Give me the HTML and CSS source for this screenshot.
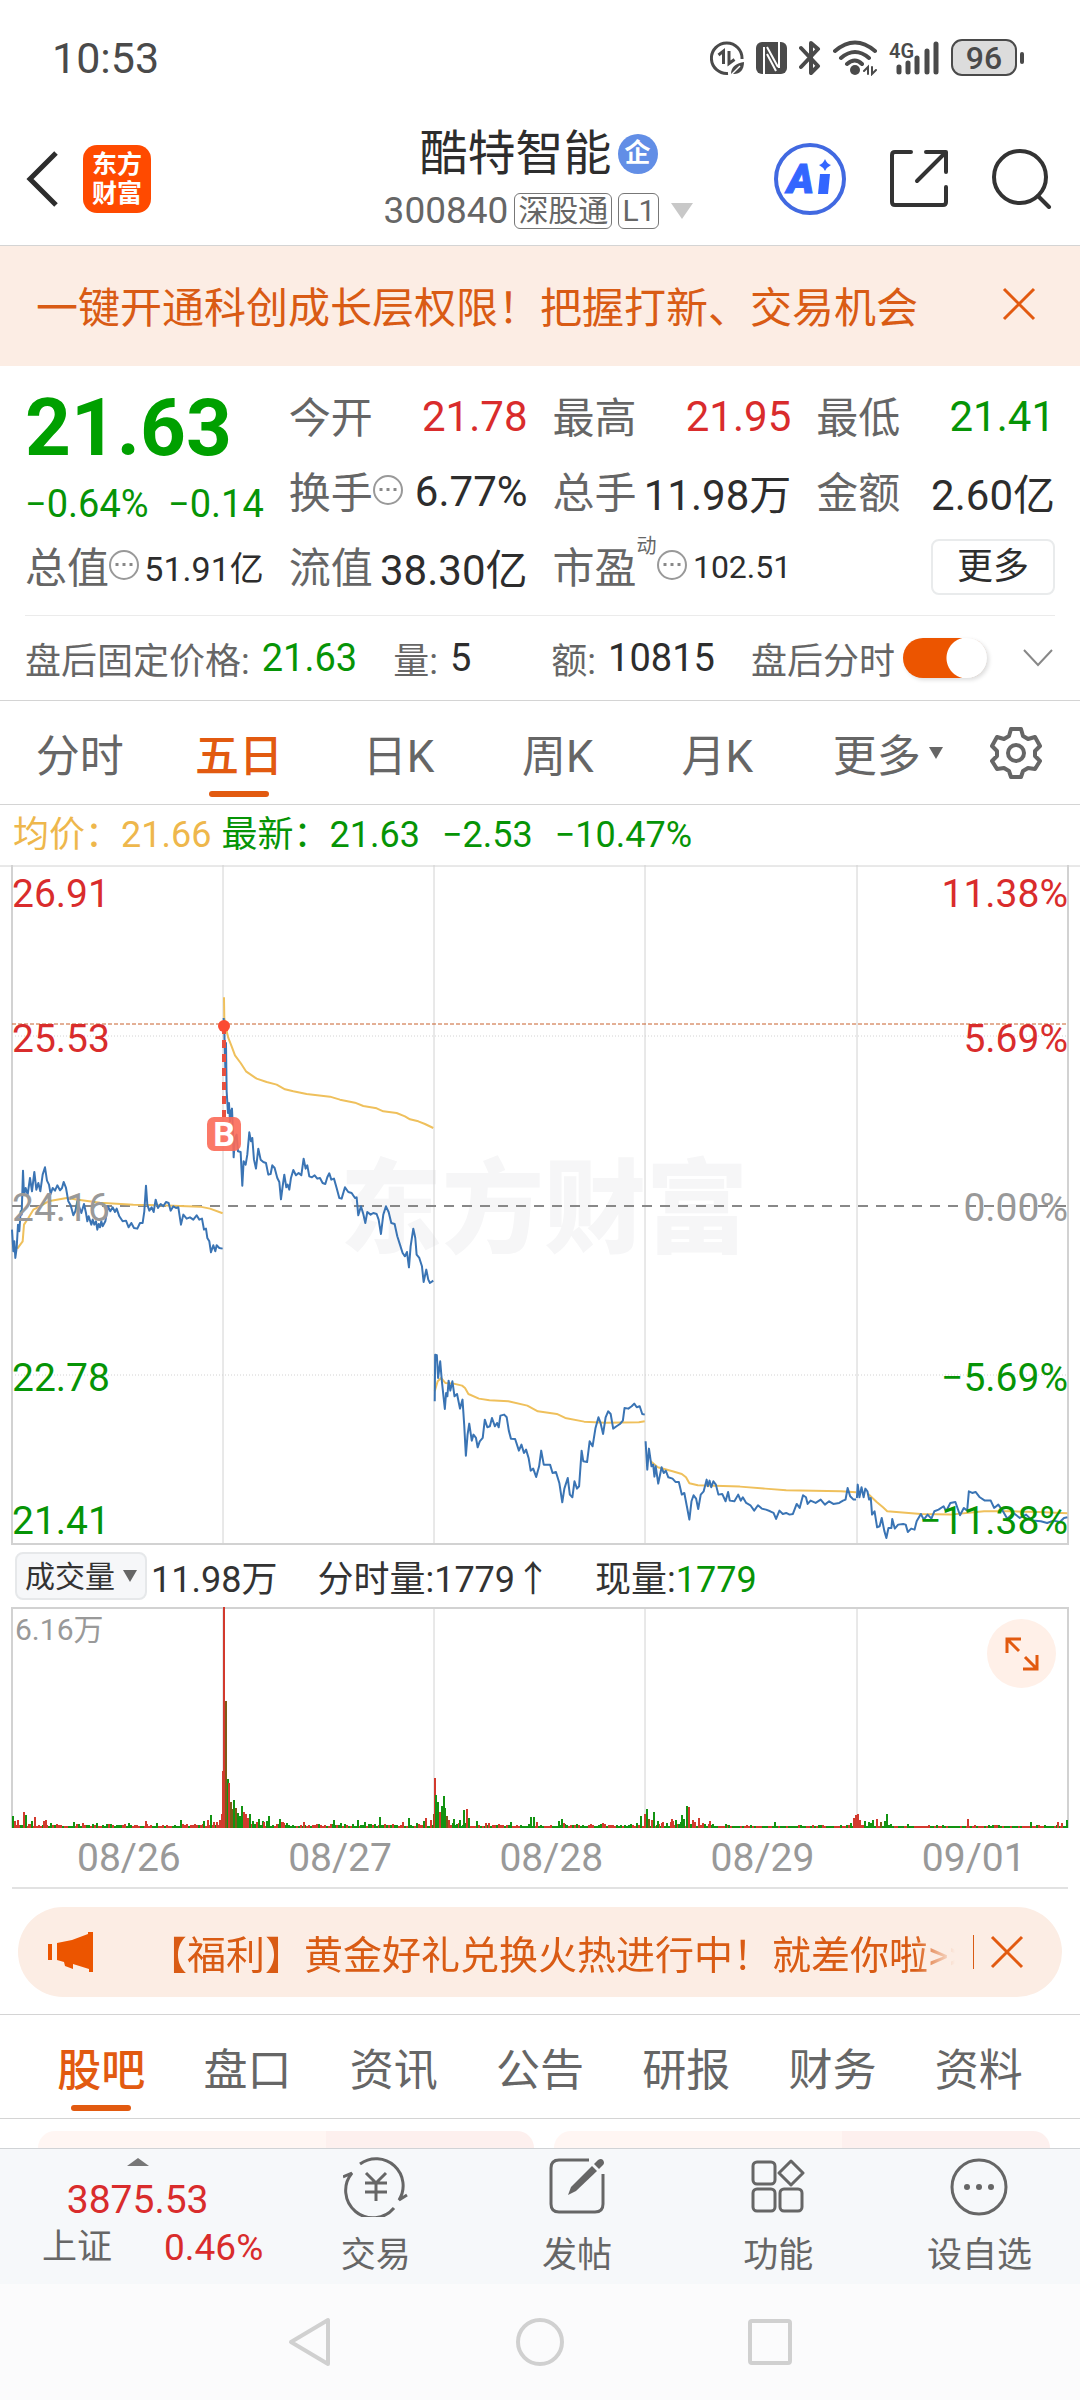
FILE: index.html
```
<!DOCTYPE html>
<html lang="zh-CN">
<head>
  <meta charset="utf-8">
  <meta name="viewport" content="width=device-width, initial-scale=1">
  <title>酷特智能 300840</title>
  <link rel="stylesheet" href="styles.css">
</head>
<body>
<div class="page">
  <div class="status-bar">
    <span class="clock">10:53</span>
    <div class="status-icons">
      <svg width="34" height="36" viewBox="0 0 34 36" fill="none" stroke="#4a4a4a" stroke-width="3">
        <path d="M18 33.5A15.300 15.300 0 1 1 32 19"/>
        <path d="M8.500 15L13.500 11V24M19 11V23.500L24.500 19.500"/>
        <path d="M21 34C21 26 27 23 34 22C34 30 30 34 24 34Z" fill="#4a4a4a" stroke="none"/>
        <path d="M21 35L30 26" stroke="#fff" stroke-width="1.500"/>
      </svg>
      <svg width="31" height="36" viewBox="0 0 31 36">
        <rect y="2" width="31" height="32" rx="6" fill="#4a4a4a"/>
        <path d="M8 34V7M23 2V28M11 14L20 31M11 7L22 27" fill="none" stroke="#fff" stroke-width="2"/>
      </svg>
      <svg width="22" height="36" viewBox="0 0 22 36" fill="none" stroke="#4a4a4a" stroke-width="4" stroke-linejoin="round" stroke-linecap="round">
        <path d="M2 8L19 26L12 33V3L19 9L2 27"/>
      </svg>
      <svg width="44" height="36" viewBox="0 0 44 36" fill="none" stroke="#4a4a4a" stroke-width="4" stroke-linecap="round">
        <path d="M2 11Q22 -6 42 11M8 18Q22 6 36 18M14 24Q22 17 29 24"/>
        <circle cx="22" cy="30" r="5" fill="#4a4a4a" stroke="none"/>
        <path d="M31 31L35 27V34M39 27V34L43 30" stroke-width="2"/>
      </svg>
      <svg width="50" height="36" viewBox="0 0 50 36">
        <text x="0" y="18" font-size="20" font-weight="600" fill="#4a4a4a">4G</text>
        <path d="M10 27V32M19 23V32M28 18V32M38 11V32M47 4V32" fill="none" stroke="#4a4a4a" stroke-width="5" stroke-linecap="round"/>
      </svg>
      <svg width="74" height="38" viewBox="0 0 74 38">
        <rect x="1" y="1" width="64" height="35" rx="10" fill="#dcdcdc" stroke="#4a4a4a" stroke-width="2"/>
        <text x="33" y="30" font-size="32" font-weight="500" text-anchor="middle" fill="#4a4a4a">96</text>
        <rect x="69" y="13" width="4" height="12" rx="2" fill="#4a4a4a"/>
      </svg>
    </div>
  </div>

  <header class="header">
    <div class="header-left">
      <button class="icon-btn" aria-label="返回">
        <svg width="34" height="56" viewBox="0 0 34 56" fill="none" stroke="#2d2d2d" stroke-width="5"><path d="M31 2L5 28L31 54"/></svg>
      </button>
      <div class="logo"><span>东方</span><span>财富</span></div>
    </div>
    <div class="title">
      <h1>酷特智能<span class="badge">企</span></h1>
      <div class="code">
        <span>300840</span><span class="tag">深股通</span><span class="tag">L1</span>
        <svg width="22" height="16" viewBox="0 0 22 16"><path d="M0 0H22L11 16Z" fill="#c8c8c8"/></svg>
      </div>
    </div>
    <div class="header-right">
      <button class="icon-btn" aria-label="AI">
        <svg width="72" height="72" viewBox="0 0 72 72">
          <circle cx="36" cy="36" r="34" fill="none" stroke="#4169e1" stroke-width="4"/>
          <text x="13" y="50" font-size="41" font-weight="900" font-style="italic" fill="#3366ff" stroke="#3366ff" stroke-width="1">A</text>
          <path d="M46 31H56L54 51H44Z" fill="#3366ff"/>
          <path d="M51 16Q53 21 57 22Q53 24 51 28Q49 24 45 22Q49 21 51 16Z" fill="#3366ff"/>
        </svg>
      </button>
      <button class="icon-btn" aria-label="分享">
        <svg width="58" height="58" viewBox="0 0 58 58" fill="none" stroke="#333" stroke-width="4" stroke-linecap="round" stroke-linejoin="round">
          <path d="M21 2H5Q2 2 2 5V52Q2 55 5 55H53Q56 55 56 52V37M36 2H56V22M55 3L27 31"/>
        </svg>
      </button>
      <button class="icon-btn" aria-label="搜索">
        <svg width="60" height="60" viewBox="0 0 60 60" fill="none" stroke="#333" stroke-width="4" stroke-linecap="round">
          <circle cx="28" cy="28" r="26"/><path d="M46 47L57 58"/>
        </svg>
      </button>
    </div>
  </header>

  <div class="notice">
    <a href="#">一键开通科创成长层权限！把握打新、交易机会</a>
    <button class="icon-btn" aria-label="关闭">
      <svg width="34" height="34" viewBox="0 0 34 34" fill="none" stroke="#e25a10" stroke-width="3"><path d="M2 2L32 32M32 2L2 32"/></svg>
    </button>
  </div>

  <section class="quote">
    <div class="price-cell">
      <div class="price">21.63</div>
      <div class="change"><span>−0.64%</span><span>−0.14</span></div>
    </div>
    <div class="cell"><span>今开</span><b class="up">21.78</b></div>
    <div class="cell"><span>最高</span><b class="up">21.95</b></div>
    <div class="cell"><span>最低</span><b class="down">21.41</b></div>
    <div class="cell"><span>换手<i class="dots"></i></span><b>6.77%</b></div>
    <div class="cell"><span>总手</span><b>11.98万</b></div>
    <div class="cell"><span>金额</span><b>2.60亿</b></div>
    <div class="cell"><span>总值<i class="dots"></i></span><b class="small">51.91亿</b></div>
    <div class="cell"><span>流值</span><b>38.30亿</b></div>
    <div class="cell"><span>市盈<sup>动</sup><i class="dots"></i></span><b class="smaller">102.51</b></div>
    <div class="cell end"><button class="more-btn">更多</button></div>
  </section>

  <section class="after-hours">
    <div class="pair"><span>盘后固定价格:</span><b class="down">21.63</b></div>
    <div class="pair volume"><span>量:</span><b>5</b></div>
    <div class="pair"><span>额:</span><b>10815</b></div>
    <label class="pair switch">盘后分时<input type="checkbox" checked></label>
    <button class="icon-btn" aria-label="展开">
      <svg width="30" height="18" viewBox="0 0 30 18" fill="none" stroke="#888" stroke-width="2"><path d="M1 1L15 16L29 1"/></svg>
    </button>
  </section>

  <nav class="period-tabs">
    <button>分时</button>
    <button class="active">五日</button>
    <button>日K</button>
    <button>周K</button>
    <button>月K</button>
    <button>更多<svg class="caret" width="14" height="12" viewBox="0 0 14 12"><path d="M0 0H14L7 12Z" fill="#666"/></svg></button>
    <button class="gear" aria-label="设置">
      <svg width="52" height="52" viewBox="0 0 52 52" fill="none" stroke="#666" stroke-width="4" stroke-linejoin="round">
        <path d="M21 2H31L33 9L38 12L45 10L50 19L45 24V29L50 34L45 42L38 41L33 44L31 50H21L19 44L14 41L7 42L2 34L7 29V24L2 19L7 10L14 12L19 9Z"/>
        <circle cx="26" cy="26" r="8"/>
      </svg>
    </button>
  </nav>

  <div class="latest">
    <span class="avg">均价：21.66</span>
    <span class="now">最新：21.63</span>
    <span class="now">−2.53</span>
    <span class="now">−10.47%</span>
  </div>

  <svg class="chart" viewBox="0 0 1080 680">
    <text class="watermark" x="544" y="380" text-anchor="middle">东方财富</text>
    <g class="frame">
      <path d="M12 0V680M1068 0V680M12 679H1068" stroke-width="2"/>
      <path d="M0 1H1080M223 0V680M434 0V680M645 0V680M857 0V680"/>
      <path d="M12 171H1068M12 510H1068" stroke-dasharray="1 2"/>
    </g>
    <path d="M12 341H1068" stroke="#888" stroke-width="2" stroke-dasharray="10 8"/>
    <path d="M12 159H1068" stroke="#c8602c" stroke-dasharray="4 2"/>

    <!-- average price, 08/26 and 08/27 -->
    <g class="line avg-line" transform="translate(0 93) scale(.3333)">
      <polyline points="52,872 68,850 72,800 85,780 100,755 120,745 145,730 200,720 240,726 300,734 400,740 480,742 600,746 630,752 668,766"/>
      <polyline points="672,118 673,180 680,220 685,240 695,265 705,292 722,315 738,340 770,362 800,372 830,380 855,394 880,400 920,408 990,416 1020,425 1065,434 1090,444 1130,451 1150,460 1190,465 1215,475 1230,484 1255,490 1275,498 1300,510"/>
    </g>
    <!-- average price, 08/28 to 09/01 -->
    <g class="line avg-line" transform="translate(420 193) scale(.4209 .3333)">
      <polyline points="35,1000 42,970 50,960 60,975 80,977 100,983 107,990 115,1008 140,1022 165,1027 210,1030 255,1043 280,1060 325,1068 345,1080 390,1091 440,1094 520,1093 534,1090"/>
      <polyline points="548,1210 565,1228 600,1240 622,1248 632,1258 640,1276 660,1282 760,1286 820,1292 870,1297 1000,1300 1036,1303"/>
      <polyline points="1065,1308 1085,1332 1100,1348 1110,1360 1190,1368 1260,1370 1340,1360 1400,1360 1470,1362 1538,1366"/>
    </g>
    <!-- price -->
    <g class="line price-line" transform="translate(0 93) scale(.3333)">
      <polyline points="36,815 40,880 43,850 46,900 50,870 54,800 58,820 62,760 65,770 69,638 72,712 77,690 83,710 90,660 96,700 103,642 109,695 115,675 121,700 128,650 135,628 141,668 147,680 152,708 158,690 165,698 172,682 180,697 186,690 191,672 198,690 205,730 212,742 220,772 226,760 232,730 238,748 244,765 252,738 258,765 262,790 266,775 274,800 278,785 283,800 288,790 292,815 296,798 300,808 304,790 308,805 316,790 324,745 331,760 338,748 345,762 350,752 358,775 368,790 378,788 386,808 394,795 402,810 412,812 420,795 428,795 433,760 438,683 442,740 448,758 455,748 461,762 467,725 474,750 482,738 490,745 498,732 506,735 512,758 520,745 528,750 535,748 543,800 550,770 560,782 570,778 580,785 590,772 598,785 606,782 612,815 618,812 622,840 628,850 633,883 640,862 646,880 650,862 658,870 668,872"/>
      <polyline points="671,180 673,220 676,330 678,255 680,400 684,465 687,435 690,490 693,460 696,452 699,520 701,598 705,540 710,530 714,580 722,582 727,683 731,610 737,620 742,590 748,523 753,550 757,540 762,605 768,632 775,572 782,605 790,612 798,615 805,650 812,648 817,622 824,630 832,660 838,672 843,724 848,685 853,650 859,688 863,680 868,695 873,660 880,636 888,652 896,645 904,652 911,602 917,632 922,622 928,655 936,658 944,652 952,662 960,660 968,675 976,678 982,658 988,646 994,665 1002,662 1010,690 1018,720 1025,722 1035,688 1045,702 1055,705 1065,720 1070,718 1075,772 1083,745 1090,768 1096,795 1102,762 1112,770 1120,765 1130,768 1136,785 1143,828 1150,770 1158,745 1166,762 1174,795 1184,798 1192,835 1200,860 1208,885 1215,895 1221,882 1227,928 1232,865 1240,812 1246,840 1250,890 1258,900 1266,925 1271,972 1279,935 1285,965 1290,975 1300,968"/>
    </g>
    <g class="line price-line" transform="translate(420 193) scale(.4209 .3333)">
      <polyline points="35,1030 36,890 40,892 43,960 48,910 52,970 59,1053 62,1005 65,1015 68,968 72,998 77,970 82,1015 88,1008 95,1052 101,1025 105,1100 109,1193 113,1130 117,1097 123,1148 127,1130 133,1140 137,1168 142,1150 149,1140 154,1085 160,1108 166,1105 171,1080 178,1105 183,1095 187,1108 191,1073 200,1070 206,1078 211,1118 216,1142 226,1143 235,1178 241,1160 247,1185 252,1175 258,1200 263,1238 269,1232 276,1257 283,1225 288,1178 294,1220 309,1220 315,1245 323,1242 331,1275 338,1333 343,1292 351,1260 356,1310 362,1318 367,1270 373,1292 378,1285 384,1178 388,1210 397,1212 403,1150 410,1165 417,1110 424,1078 429,1095 435,1128 441,1078 447,1060 453,1068 459,1112 467,1105 475,1098 482,1088 486,1050 495,1052 503,1045 509,1037 515,1048 522,1045 528,1068 534,1070"/>
      <polyline points="536,1150 540,1235 544,1172 550,1225 554,1220 557,1256 560,1225 566,1277 574,1228 579,1245 584,1238 590,1258 600,1262 607,1272 615,1272 622,1310 628,1305 634,1345 640,1385 645,1330 650,1312 656,1322 661,1353 667,1310 674,1300 681,1265 684,1285 688,1268 692,1288 697,1270 703,1280 709,1310 718,1308 726,1330 732,1302 736,1328 747,1330 756,1310 762,1328 767,1318 775,1335 785,1342 794,1358 803,1342 812,1352 822,1355 832,1360 840,1365 846,1383 854,1358 862,1368 870,1365 878,1370 886,1368 895,1338 902,1350 910,1312 917,1318 921,1338 928,1328 940,1335 952,1325 962,1340 972,1330 982,1338 996,1335 1005,1328 1011,1325 1016,1290 1022,1315 1030,1325 1036,1325"/>
      <polyline points="1038,1320 1040,1280 1044,1318 1049,1288 1054,1318 1058,1292 1063,1300 1067,1325 1071,1320 1074,1370 1080,1360 1086,1408 1092,1405 1097,1380 1103,1418 1108,1440 1113,1410 1120,1410 1122,1383 1128,1412 1136,1400 1148,1398 1154,1400 1159,1422 1167,1412 1175,1415 1180,1390 1190,1368 1197,1385 1206,1370 1215,1382 1222,1360 1232,1355 1244,1345 1250,1360 1260,1335 1272,1332 1283,1372 1292,1350 1300,1358 1304,1300 1312,1305 1320,1302 1330,1318 1342,1328 1356,1328 1364,1350 1374,1340 1385,1360 1395,1382 1410,1365 1425,1380 1440,1370 1455,1388 1475,1390 1490,1395 1505,1388 1520,1392 1530,1380 1538,1378"/>
    </g>

    <!-- buy mark -->
    <path d="M224 161V252" stroke="#e8503f" stroke-width="4" stroke-dasharray="8 6"/>
    <circle cx="224" cy="161" r="6" fill="#fb4b32"/>
    <rect x="207" y="252" width="34" height="34" rx="7" fill="#fb6a58" fill-opacity="0.9"/>
    <text x="224" y="281" font-size="34" font-weight="700" text-anchor="middle" fill="#fff">B</text>

    <g class="axis">
      <text class="up" x="12" y="42">26.91</text>
      <text class="up" x="12" y="187">25.53</text>
      <text class="flat" x="12" y="356">24.16</text>
      <text class="down" x="12" y="526">22.78</text>
      <text class="down" x="12" y="669">21.41</text>
    </g>
    <g class="axis" text-anchor="end">
      <text class="up" x="1068" y="42">11.38%</text>
      <text class="up" x="1068" y="187">5.69%</text>
      <text class="flat" x="1068" y="356">0.00%</text>
      <text class="down" x="1068" y="526">−5.69%</text>
      <text class="down" x="1068" y="669">−11.38%</text>
    </g>
  </svg>

  <div class="volume-info">
    <div class="select-wrap">
      <select aria-label="指标"><option>成交量</option></select>
      <svg width="14" height="12" viewBox="0 0 14 12"><path d="M0 0H14L7 12Z" fill="#666"/></svg>
    </div>
    <span class="total">11.98万</span>
    <span class="minute">分时量:1779↑</span>
    <span>现量:<b class="down">1779</b></span>
  </div>

  <div class="volume-wrap">
    <svg class="chart" viewBox="0 0 1080 222">
      <g class="frame">
        <path d="M12 1H1068M12 0V221M1068 0V221" stroke-width="2"/>
        <path d="M223 0V221M434 0V221M645 0V221M857 0V221"/>
      </g>
      <g id="bars"></g>
      <text class="flat" x="15" y="33" font-size="30">6.16万</text>
    </svg>
    <button class="expand" aria-label="全屏">
      <svg width="36" height="36" viewBox="0 0 36 36" fill="none" stroke="#e25a10" stroke-width="3">
        <path d="M3 17V3H17M3 3L15 15M33 19V33H19M33 33L21 21"/>
      </svg>
    </button>
  </div>
  <div class="dates">
    <span>08/26</span><span>08/27</span><span>08/28</span><span>08/29</span><span>09/01</span>
  </div>

  <div class="promo">
    <svg width="46" height="40" viewBox="0 0 46 40" fill="#ec5500">
      <path d="M0 12H4V28H0ZM9 11L24 8L40 2V0H45V40H41V37L25 32V37L17 34L16 30L9 28Z"/>
    </svg>
    <a href="#">【福利】黄金好礼兑换火热进行中！就差你啦&gt;&gt;</a>
    <button class="icon-btn" aria-label="关闭">
      <svg width="34" height="34" viewBox="0 0 34 34" fill="none" stroke="#e25a10" stroke-width="3"><path d="M2 2L32 32M32 2L2 32"/></svg>
    </button>
  </div>

  <nav class="info-tabs">
    <button class="active">股吧</button>
    <button>盘口</button>
    <button>资讯</button>
    <button>公告</button>
    <button>研报</button>
    <button>财务</button>
    <button>资料</button>
  </nav>
  <div class="feed"><div class="card"></div><div class="card"></div></div>

  <footer class="toolbar">
    <a class="index" href="#">
      <svg width="22" height="8" viewBox="0 0 22 8"><path d="M0 8L11 0L22 8Z" fill="#777"/></svg>
      <span class="index-value">3875.53</span>
      <span class="index-row"><span>上证</span><span class="up">0.46%</span></span>
    </a>
    <button class="tool">
      <svg width="66" height="60" viewBox="0 0 66 60" fill="none" stroke="#666" stroke-width="3">
        <path d="M17 7A27 27 0 0 1 56 43L64 38M51 51A27 27 0 0 1 9 16L0 20"/>
        <path d="M23 16L33 26L43 16M22 26H44M22 35H44M33 26V44"/>
      </svg>交易
    </button>
    <button class="tool">
      <svg width="56" height="60" viewBox="0 0 56 60" fill="none" stroke="#666" stroke-width="3">
        <path d="M40 3H10Q2 3 2 11V47Q2 55 10 55H46Q54 55 54 47V17"/>
        <path d="M19 38L22 30L43 9L48 14L27 34Z" fill="#666" stroke="none"/>
        <path d="M45 7L49 3Q52 1 54 3Q56 6 54 8L50 12Z" fill="#666" stroke="none"/>
      </svg>发帖
    </button>
    <button class="tool">
      <svg width="54" height="60" viewBox="0 0 54 60" fill="none" stroke="#666" stroke-width="3" stroke-linejoin="round">
        <rect x="2" y="5" width="22" height="22" rx="4"/>
        <rect x="2" y="32" width="22" height="22" rx="4"/>
        <rect x="29" y="32" width="22" height="22" rx="4"/>
        <path d="M40 4L52 16L40 28L28 16Z"/>
      </svg>功能
    </button>
    <button class="tool">
      <svg width="58" height="60" viewBox="0 0 58 60" fill="none" stroke="#666" stroke-width="3">
        <circle cx="29" cy="30" r="27"/>
        <g fill="#666" stroke="none"><circle cx="17" cy="30" r="3"/><circle cx="29" cy="30" r="3"/><circle cx="41" cy="30" r="3"/></g>
      </svg>设自选
    </button>
  </footer>

  <div class="system-nav">
    <svg width="46" height="50" viewBox="0 0 46 50"><path d="M41 3V47L4 25Z"/></svg>
    <svg width="50" height="50" viewBox="0 0 50 50"><circle cx="25" cy="25" r="22"/></svg>
    <svg width="46" height="50" viewBox="0 0 46 50"><rect x="3" y="4" width="40" height="42" rx="2"/></svg>
  </div>
</div>

<script>
  var RED = '#d23a2e';
  var GREEN = '#129312';
  var MIX = '#7f5a17';
  var BASE = 221;
  var bars = document.getElementById('bars');

  // x, height, color
  var peaks = [
    [12, 12, GREEN], [14, 7, RED], [17, 8, RED], [23, 16, RED], [25, 13, GREEN], [31, 7, GREEN], [34, 11, RED],
    [43, 7, RED], [45, 8, RED], [50, 5, GREEN], [73, 6, GREEN], [82, 5, RED], [96, 5, GREEN], [128, 5, GREEN],
    [145, 7, RED], [156, 5, GREEN], [180, 8, GREEN], [203, 7, GREEN], [207, 8, RED], [210, 13, GREEN],
    [213, 6, RED], [216, 6, RED], [219, 8, RED], [221, 14, RED],
    [222, 57, RED], [223, 221, RED], [225, 127, MIX], [227, 49, GREEN], [228, 45, RED], [230, 26, MIX], [232, 19, MIX],
    [233, 28, GREEN], [235, 20, MIX], [237, 15, GREEN], [239, 12, GREEN], [241, 22, GREEN], [243, 16, RED],
    [245, 14, RED], [247, 10, RED], [249, 14, GREEN], [252, 7, GREEN], [258, 9, GREEN], [263, 6, RED],
    [268, 12, GREEN], [279, 9, GREEN], [283, 5, RED], [303, 6, RED], [333, 8, GREEN], [340, 5, GREEN],
    [357, 8, GREEN], [364, 6, GREEN], [379, 11, GREEN], [402, 6, RED], [408, 10, GREEN], [416, 5, GREEN],
    [423, 7, GREEN], [425, 10, RED], [430, 8, RED], [433, 14, MIX],
    [434, 50, RED], [435, 33, GREEN], [437, 26, GREEN], [439, 16, RED], [441, 22, GREEN], [443, 32, GREEN],
    [444, 20, GREEN], [446, 12, MIX], [448, 8, RED], [453, 9, GREEN], [459, 8, GREEN], [463, 18, GREEN],
    [466, 19, RED], [468, 10, GREEN], [476, 7, GREEN], [485, 5, RED], [510, 6, GREEN], [530, 11, GREEN],
    [533, 11, GREEN], [536, 6, RED], [558, 7, GREEN], [561, 9, GREEN], [563, 5, RED], [600, 4, GREEN],
    [636, 5, GREEN], [640, 12, GREEN], [644, 14, RED], [646, 19, GREEN], [648, 9, MIX], [651, 8, RED],
    [653, 16, GREEN], [657, 7, GREEN], [661, 5, RED], [671, 9, RED], [675, 8, GREEN], [681, 13, GREEN],
    [683, 9, GREEN], [686, 22, GREEN], [688, 21, RED], [692, 8, RED], [698, 10, RED], [702, 5, RED],
    [709, 7, RED], [725, 4, GREEN], [774, 6, GREEN], [850, 5, GREEN], [853, 10, RED], [855, 13, RED],
    [857, 14, RED], [859, 8, RED], [868, 6, GREEN], [872, 8, GREEN], [876, 9, RED], [880, 6, MIX],
    [884, 7, GREEN], [886, 14, GREEN], [907, 4, GREEN], [967, 9, RED], [1030, 6, GREEN], [1057, 6, RED],
    [1061, 5, RED], [1066, 8, GREEN]
  ];

  function addBar(x, h, color) {
    var rect = document.createElementNS('http://www.w3.org/2000/svg', 'rect');
    rect.setAttribute('x', x);
    rect.setAttribute('y', BASE - h);
    rect.setAttribute('width', 2);
    rect.setAttribute('height', h);
    rect.setAttribute('fill', color);
    bars.appendChild(rect);
  }

  // quiet minutes between the peaks
  var seed = 7;
  function random() {
    seed = (seed * 16807) % 2147483647;
    return seed / 2147483647;
  }
  for (var x = 12; x < 1068; x += 2) {
    var busy = (x > 223 && x < 300) || (x > 434 && x < 490) || (x > 645 && x < 710) || (x > 857 && x < 890) ? 6 : 3;
    if (x > 715 && x < 845 || x > 890) {
      busy = 1;
    }
    addBar(x, 2 + Math.round(random() * random() * busy), random() > 0.5 ? RED : GREEN);
  }
  peaks.forEach(function(p) {
    addBar(p[0], p[1], p[2]);
  });
</script>
</body>
</html>
```

FILE: styles.css
```
* {
  box-sizing: border-box;
}

body {
  margin: 0;
  background: #fff;
  color: #2d2d2d;
  font-family: Roboto, "Noto Sans CJK SC", sans-serif;
  font-size: 36px;
  white-space: nowrap;
}

button,
select {
  padding: 0;
  border: none;
  background: none;
  color: inherit;
  font: inherit;
  cursor: pointer;
}

a {
  color: inherit;
  text-decoration: none;
}

b {
  font-weight: 400;
}

svg {
  display: block;
  flex: none;
}

.page {
  display: flex;
  flex-direction: column;
  min-height: 100vh;
}

.up {
  color: #d92c2c;
  fill: #d92c2c;
}

.down {
  color: #069406;
  fill: #069406;
}

.flat {
  fill: #999;
}

.icon-btn {
  display: flex;
}

/* status bar */
.status-bar {
  display: flex;
  align-items: center;
  justify-content: space-between;
  height: 116px;
  padding: 0 55px 0 52px;
  color: #4a4a4a;
}

.clock {
  font-size: 43px;
}

.status-icons {
  display: flex;
  align-items: center;
  gap: 12px;
}

/* header */
.header {
  display: grid;
  grid-template-columns: 1fr auto 1fr;
  align-items: center;
  height: 130px;
  padding: 0 28px 4px 25px;
  border-bottom: 1px solid #d4d4d4;
}

.header-left,
.header-right {
  display: flex;
  align-items: center;
}

.header-left {
  gap: 24px;
}

.header-right {
  justify-content: flex-end;
  gap: 44px;
}

.logo {
  display: flex;
  flex-direction: column;
  align-items: center;
  justify-content: center;
  width: 68px;
  height: 68px;
  border-radius: 14px;
  background: #ff4a00;
  color: #fff;
  font-size: 25px;
  font-weight: 700;
  line-height: 29px;
}

.title h1 {
  display: flex;
  align-items: center;
  justify-content: center;
  gap: 6px;
  margin: 0;
  font-size: 48px;
  font-weight: 400;
  line-height: 64px;
}

.badge {
  width: 40px;
  height: 40px;
  border-radius: 50%;
  background: #628ee6;
  color: #fff;
  font-size: 26px;
  font-weight: 700;
  line-height: 38px;
  text-align: center;
}

.code {
  display: flex;
  align-items: center;
  justify-content: center;
  gap: 6px;
  color: #666;
  font-size: 37px;
  line-height: 50px;
}

.code svg {
  margin-left: 6px;
}

.tag {
  padding: 0 3px;
  border: 1px solid #777;
  border-radius: 6px;
  font-size: 30px;
  line-height: 34px;
}

/* notice */
.notice {
  display: flex;
  align-items: center;
  justify-content: space-between;
  height: 120px;
  padding: 0 44px 4px 36px;
  background: #fcede4;
  color: #d95b14;
  font-size: 42px;
}

/* quote */
.quote {
  display: grid;
  grid-template-columns: repeat(4, minmax(0, 1fr));
  grid-auto-rows: 75px;
  column-gap: 25px;
  margin: 0 25px;
  padding: 13px 0 11px;
  border-bottom: 1px solid #ebebeb;
}

.price-cell {
  grid-row: span 2;
}

.price {
  color: #00a000;
  font-size: 80px;
  font-weight: 700;
  line-height: 98px;
}

.change {
  display: flex;
  justify-content: space-between;
  color: #069406;
  font-size: 38px;
  line-height: 54px;
}

.cell {
  display: flex;
  align-items: center;
  justify-content: space-between;
  color: #666;
  font-size: 42px;
}

.cell span {
  display: flex;
  align-items: center;
  padding-bottom: 4px;
}

.cell b:not(.up):not(.down) {
  color: #2d2d2d;
}

.cell .small {
  font-size: 34px;
}

.cell .smaller {
  font-size: 32px;
}

.cell sup {
  align-self: flex-start;
  font-size: 20px;
  line-height: 24px;
}

.cell.end {
  justify-content: flex-end;
}

.dots {
  width: 30px;
  height: 30px;
  border: 2px solid #999;
  border-radius: 50%;
  background: radial-gradient(circle, #888 2px, transparent 2px) center / 7px 7px repeat-x;
  background-clip: content-box;
  padding: 0 3px;
}

.more-btn {
  width: 124px;
  height: 56px;
  border: 2px solid #e9ebec;
  border-radius: 8px;
  color: #2d2d2d;
  font-size: 36px;
  line-height: 48px;
}

/* after hours */
.after-hours {
  display: flex;
  align-items: center;
  justify-content: space-between;
  height: 85px;
  padding: 0 27px 0 25px;
  border-bottom: 1px solid #d4d4d4;
}

.pair {
  display: flex;
  align-items: center;
  gap: 12px;
  color: #666;
}

.pair b {
  font-size: 38px;
}

.pair b:not(.down) {
  color: #2d2d2d;
}

.volume {
  padding-right: 44px;
}

.switch {
  gap: 8px;
}

.switch input {
  appearance: none;
  width: 84px;
  height: 40px;
  margin: 0;
  border-radius: 20px;
  background: radial-gradient(circle at 64px 20px, #fff 20px, transparent 21px), #ec5500;
  box-shadow: 2px 2px 4px #ddd;
}

/* tabs */
.period-tabs,
.info-tabs {
  display: grid;
  border-bottom: 1px solid #d4d4d4;
  color: #666;
  font-size: 44px;
}

.period-tabs {
  grid-template-columns: repeat(6, 4fr) 3fr;
  height: 104px;
  padding-right: 4px;
}

.info-tabs {
  grid-template-columns: repeat(7, 1fr);
  height: 105px;
  padding: 0 28px;
  border-top: 1px solid #d4d4d4;
}

.period-tabs button,
.info-tabs button {
  position: relative;
  display: flex;
  align-items: center;
  justify-content: center;
}

.period-tabs .active,
.info-tabs .active {
  color: #e25a10;
  font-weight: 500;
}

.active::after {
  content: "";
  position: absolute;
  bottom: 7px;
  width: 60px;
  height: 6px;
  border-radius: 3px;
  background: #e25a10;
}

.caret {
  margin: 0 -22px 0 8px;
}

/* charts */
.latest {
  display: flex;
  align-items: baseline;
  gap: 22px;
  padding: 0 13px;
  line-height: 60px;
}

.avg {
  margin-right: -12px;
  color: #eeb74c;
}

.now {
  color: #069406;
}

.chart {
  width: 100%;
  height: auto;
}

.frame {
  fill: none;
  stroke: #d2d2d2;
}

.line {
  fill: none;
  stroke-linejoin: round;
}

.line polyline {
  stroke-width: 2px;
  vector-effect: non-scaling-stroke;
}

.avg-line {
  stroke: #efc05c;
}

.price-line {
  stroke: #3a74b4;
}

.watermark {
  fill: #f6f6f7;
  font-size: 102px;
  font-weight: 900;
}

.axis {
  font-size: 39px;
}

.volume-info {
  display: flex;
  align-items: center;
  height: 62px;
  padding: 0 15px;
  color: #333;
}

.select-wrap {
  display: flex;
  align-items: center;
  height: 48px;
  margin-right: 4px;
  padding: 0 8px;
  border: 2px solid #e6e8ea;
  border-radius: 8px;
  background: #f6f7f9;
}

.select-wrap select {
  appearance: none;
  width: 98px;
  font-size: 30px;
}

.total {
  margin-right: 40px;
}

.minute {
  margin-right: 44px;
}

.volume-wrap {
  position: relative;
}

.expand {
  position: absolute;
  top: 12px;
  right: 24px;
  display: flex;
  align-items: center;
  justify-content: center;
  width: 69px;
  height: 69px;
  border-radius: 50%;
  background: #fff0e8;
}

.dates {
  display: grid;
  grid-template-columns: repeat(5, 1fr);
  margin: 0 12px;
  border-bottom: 2px solid #e2e2e2;
  color: #999;
  font-size: 39px;
  line-height: 58px;
}

.dates span {
  padding-left: 65px;
}

/* promo */
.promo {
  display: flex;
  align-items: center;
  height: 90px;
  margin: 18px 18px 17px;
  padding: 0 38px 0 30px;
  border-radius: 45px;
  background: #fcede4;
  color: #d95b14;
  font-size: 39px;
}

.promo a {
  flex: 1;
  margin: 0 18px 0 54px;
  overflow: hidden;
  mask-image: linear-gradient(to left, transparent, #000 40px);
}

.promo button {
  padding-left: 16px;
  border-left: 1px solid #d95b14;
}

/* top of the feed, the rest is under the toolbar */
.feed {
  display: grid;
  flex: 1;
  grid-template-columns: 1fr 1fr;
  gap: 20px;
  min-height: 26px;
  padding: 12px 30px 0 38px;
}

.card {
  border-radius: 24px 24px 0 0;
  background: linear-gradient(to right, #fff6f3 58%, #fdf0ee 58%);
}

/* toolbar */
.toolbar {
  display: grid;
  grid-template-columns: 275fr repeat(4, 201fr);
  height: 136px;
  border-top: 1px solid #d0d3d6;
  background: #f6f8fa;
  color: #666;
  font-size: 35px;
}

.index {
  display: flex;
  flex-direction: column;
  align-items: center;
  padding-top: 9px;
}

.index-value {
  margin-top: 10px;
  color: #d92c2c;
  font-size: 39px;
  line-height: 48px;
}

.index-row {
  display: flex;
  gap: 52px;
  padding-left: 30px;
  line-height: 48px;
}

.index-row .up {
  font-size: 37px;
}

.tool {
  display: flex;
  flex-direction: column;
  align-items: center;
  gap: 14px;
  padding-top: 8px;
  line-height: 50px;
}

.system-nav {
  display: flex;
  align-items: center;
  justify-content: center;
  gap: 182px;
  height: 116px;
  background: #fbfbfc;
}

.system-nav svg {
  fill: none;
  stroke: #d0d0d0;
  stroke-width: 4px;
  stroke-linejoin: round;
}
```
